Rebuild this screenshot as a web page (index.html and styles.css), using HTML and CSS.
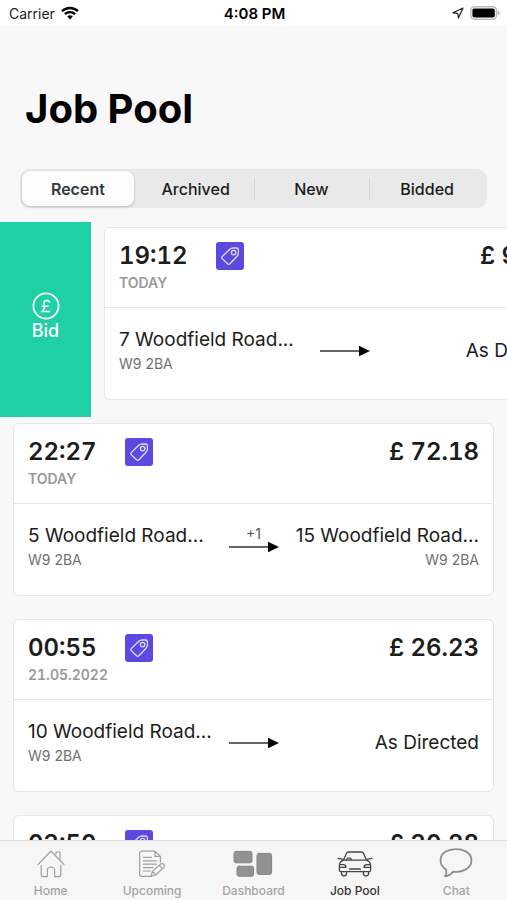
FILE: index.html
```html
<!DOCTYPE html>
<html lang="en">
<head>
<meta charset="utf-8">
<meta name="viewport" content="width=device-width, initial-scale=1">
<title>Job Pool</title>
<link rel="stylesheet" href="styles.css">
</head>
<body>
<svg class="sprite" aria-hidden="true">
  <symbol id="tag" viewBox="0 0 28 28">
    <path d="M6.2 14.6 L13.8 7.2 Q15.3 5.8 17.2 5.8 L20.6 6 Q22.4 6.2 22.4 8 V11 Q22.4 12.8 21 14.2 L14 21.8 Q12.8 23 11.6 21.8 L6.2 16.6 Q5.2 15.6 6.2 14.6 Z"/>
    <circle cx="17.6" cy="10.6" r="2.2"/>
  </symbol>
  <symbol id="arrow" viewBox="0 0 50 12">
    <path d="M0 6 H42" fill="none" stroke="#333" stroke-width="1.6"/>
    <path d="M39 .8 L50 6 L39 11.2 Z" fill="#000"/>
  </symbol>
</svg>

<div class="status">
  <div class="status-left">
    <span>Carrier</span>
    <svg width="18" height="14" viewBox="0 0 18 14" fill="none" stroke="#000" stroke-width="2.4" aria-hidden="true">
      <path d="M1 5.2 A11.6 11.6 0 0 1 17 5.2"/>
      <path d="M3.9 8.2 A7.4 7.4 0 0 1 14.1 8.2"/>
      <path d="M6.2 10.6 A4 4 0 0 1 11.8 10.6 L9 13.6 Z" fill="#000" stroke="none"/>
    </svg>
  </div>
  <span class="clock">4:08 PM</span>
  <div class="status-right">
    <svg width="12" height="12" viewBox="0 0 12 12" fill="none" stroke="#222" stroke-width="1.2" stroke-linejoin="round" aria-hidden="true"><path d="M11 1 L1 5.8 L5.7 6.3 L6.4 11 Z"/></svg>
    <svg width="30" height="14" viewBox="0 0 30 14" aria-hidden="true">
      <rect x=".8" y=".8" width="25.6" height="12.4" rx="3.6" fill="#fff" stroke="#bbb" stroke-width="1.4"/>
      <rect x="2.4" y="2.4" width="22.4" height="9.2" rx="2" fill="#000"/>
      <path d="M27.8 4.8 Q29.6 5.4 29.6 7 T27.8 9.2 Z" fill="#aaa"/>
    </svg>
  </div>
</div>

<header class="header">
  <h1>Job Pool</h1>
  <div class="segments">
    <button class="segment selected" type="button">Recent</button>
    <button class="segment" type="button">Archived</button>
    <button class="segment" type="button">New</button>
    <button class="segment" type="button">Bidded</button>
  </div>
</header>

<main class="jobs">
  <div class="row">
    <button class="bid" type="button">
      <svg width="28" height="28" viewBox="0 0 28 28" fill="none" stroke="#fff" stroke-width="1.8" aria-hidden="true">
        <circle cx="14" cy="14" r="12.6"/>
        <path d="M17.7 10.6 C17.4 7.7 12 7.4 12 11.2 C12 13.4 13.8 16.6 10.2 19.6 H18.2 M9.6 14.2 H16.6" stroke-width="1.5"/>
      </svg>
      <span>Bid</span>
    </button>
    <article class="card">
      <div class="card-head">
        <div><div class="time">19:12</div><div class="date">TODAY</div></div>
        <svg class="badge" aria-hidden="true"><use href="#tag"/></svg>
        <div class="price">£ 95.40</div>
      </div>
      <div class="route">
        <div><div class="place">7 Woodfield Road...</div><div class="code">W9 2BA</div></div>
        <div class="leg"><svg class="arrow" aria-hidden="true"><use href="#arrow"/></svg></div>
        <div class="to"><div class="place">As Directed</div></div>
      </div>
    </article>
  </div>
  <div class="row">
    <article class="card">
      <div class="card-head">
        <div><div class="time">22:27</div><div class="date">TODAY</div></div>
        <svg class="badge" aria-hidden="true"><use href="#tag"/></svg>
        <div class="price">£ 72.18</div>
      </div>
      <div class="route">
        <div><div class="place">5 Woodfield Road...</div><div class="code">W9 2BA</div></div>
        <div class="leg"><span class="stops">+1</span><svg class="arrow" aria-hidden="true"><use href="#arrow"/></svg></div>
        <div class="to"><div class="place">15 Woodfield Road...</div><div class="code">W9 2BA</div></div>
      </div>
    </article>
  </div>
  <div class="row">
    <article class="card">
      <div class="card-head">
        <div><div class="time">00:55</div><div class="date">21.05.2022</div></div>
        <svg class="badge" aria-hidden="true"><use href="#tag"/></svg>
        <div class="price">£ 26.23</div>
      </div>
      <div class="route">
        <div><div class="place">10 Woodfield Road...</div><div class="code">W9 2BA</div></div>
        <div class="leg"><svg class="arrow" aria-hidden="true"><use href="#arrow"/></svg></div>
        <div class="to"><div class="place">As Directed</div></div>
      </div>
    </article>
  </div>
  <div class="row">
    <article class="card">
      <div class="card-head">
        <div><div class="time">03:50</div></div>
        <svg class="badge" aria-hidden="true"><use href="#tag"/></svg>
        <div class="price">£ 30.28</div>
      </div>
    </article>
  </div>
</main>

<nav class="tabs">
  <a class="tab" href="#home">
    <svg width="28" height="28" viewBox="0 0 28 28" aria-hidden="true">
      <path d="M1 14.6 L13 2 Q14 1 15 2 L27 14.6 M19 4 V2 H23 V10 M4.2 15.4 V24.6 Q4.2 26.6 6.2 26.6 H10.4 V20 Q10.4 17 14 17 T17.6 20 V26.6 H21.8 Q23.8 26.6 23.8 24.6 V15.4"/>
    </svg>
    <span>Home</span>
  </a>
  <a class="tab" href="#upcoming">
    <svg width="28" height="28" viewBox="0 0 28 28" aria-hidden="true">
      <path d="M14 26.4 H4 Q1.6 26.4 1.6 24 V3.6 Q1.6 1.2 4 1.2 H17 L22.4 6.4 V12 M17 1.2 V6.4 H22.4 M5.4 7.4 H13.6 M5.4 10.8 H18.4 M5.4 14.2 H18.4 M5.4 17.6 H15 M5.4 21 H12.4 M14.4 21.4 L23 13.8 Q24.4 13 26 14.6 Q27 16 26 17.2 L17.6 25 L13.2 26 Z M14.4 21.4 L17.6 25 M21.4 15.4 L24.4 18.6"/>
    </svg>
    <span>Upcoming</span>
  </a>
  <a class="tab" href="#dashboard">
    <svg width="40" height="28" viewBox="0 0 40 28" aria-hidden="true">
      <g fill="#929292" stroke="#858585" stroke-width="1"><rect x="1" y="1.4" width="18" height="11.4" rx="2"/><rect x="4" y="16.2" width="16.6" height="10" rx="2"/><rect x="24" y="3.4" width="14.6" height="21" rx="2"/></g>
    </svg>
    <span>Dashboard</span>
  </a>
  <a class="tab current" href="#pool" aria-current="page">
    <svg width="36" height="28" viewBox="0 0 36 28" aria-hidden="true">
      <path d="M6.4 10.2 L9.4 3.4 Q9.8 2 11.6 2 H24.4 Q26 2 26.6 3.4 L29.6 10.2 M1 8.4 L5.4 9.2 M35 8.4 L30.6 9.2 M6.4 10.2 H29.6 Q33.6 12 33.6 15.6 V20.2 Q33.6 21.6 32.2 21.6 H3.8 Q2.4 21.6 2.4 20.2 V15.6 Q2.4 12 6.4 10.2 Z M2.6 14.6 H6.6 Q9 15 9 17.4 H2.6 M33.4 14.6 H29.4 Q27 15 27 17.4 H33.4 M12.6 19 H23.4 M4.4 21.6 V23.6 Q4.4 26 7 26 T9.6 23.6 V21.6 M26.4 21.6 V23.6 Q26.4 26 29 26 T31.6 23.6 V21.6 M9.4 10 Q10 7.8 12 7.8 T14.4 10"/>
    </svg>
    <span>Job Pool</span>
  </a>
  <a class="tab" href="#chat">
    <svg class="chat" width="34" height="30" viewBox="0 0 34 30" aria-hidden="true">
      <path d="M7.2 21.8 C-1 16.4 .4 7.4 6.8 3.6 C12 .4 21 .2 26.8 3.4 C34.4 7.6 34.2 17.4 26.8 21.4 C22.6 23.8 18.2 24.2 14.4 23.6 C12.2 26.4 9.4 27.8 6 28.4 C7.4 26.2 7.8 24 7.2 21.8 Z"/>
    </svg>
    <span>Chat</span>
  </a>
</nav>
</body>
</html>
```

FILE: styles.css
```css
* { box-sizing: border-box; }

body {
  display: flex;
  flex-direction: column;
  height: 100vh;
  margin: 0;
  overflow: hidden;
  background: #f8f8f8;
  color: #1c1c1c;
  font-family: Inter, "Liberation Sans", sans-serif;
}

button {
  border: 0;
  padding: 0;
  background: none;
  color: inherit;
  font: inherit;
}

.sprite {
  position: absolute;
  width: 0;
  height: 0;
}

.status {
  display: grid;
  grid-template-columns: 1fr auto 1fr;
  align-items: center;
  flex: none;
  height: 26px;
  padding: 0 7px 0 9px;
  background: #fff;
  font-size: 14px;
}

.status-left,
.status-right {
  display: flex;
  align-items: center;
  gap: 6px;
}

.status-right { justify-content: flex-end; }

.clock {
  color: #000;
  font-size: 15px;
  font-weight: 600;
}

.header {
  flex: none;
  padding: 58px 20px 14px;
}

h1 {
  margin: 0 5px;
  color: #000;
  font-size: 40px;
  line-height: 50px;
  font-weight: 700;
}

.segments {
  display: grid;
  grid-template-columns: repeat(4, 1fr);
  margin-top: 35px;
  padding: 2px;
  border-radius: 10px;
  background: #e9e9e9;
}

.segment {
  height: 35px;
  font-size: 16px;
  font-weight: 500;
}

.segment + .segment {
  background: linear-gradient(#d6d6d6, #d6d6d6) left center / 1px 22px no-repeat;
}

.segment.selected {
  margin-right: 4px;
  border-radius: 8px;
  background: #fcfcfc;
  box-shadow: 0 1px 3px rgba(0, 0, 0, 0.2);
  font-weight: 600;
  color: #33383b;
}

.segment.selected + .segment { background: none; }

.jobs {
  flex: 1;
  min-height: 0;
  overflow: hidden auto;
  scrollbar-width: none;
}

.row {
  display: flex;
  height: 196px;
  overflow: hidden;
}

.bid {
  display: flex;
  flex: 0 0 91px;
  flex-direction: column;
  align-items: center;
  justify-content: center;
  height: 195px;
  padding-bottom: 5px;
  background: #20d0a5;
  color: #fff;
  font-size: 18px;
  line-height: 22px;
  font-weight: 500;
}

.card {
  flex: 0 0 calc(100% - 26px);
  height: 173px;
  margin: 5px 13px 0;
  border: 1px solid #e6e6e6;
  border-radius: 6px;
  background: #fff;
}

.card-head {
  display: grid;
  grid-template-columns: 97px 28px 1fr;
  align-items: start;
  height: 80px;
  padding: 12px 14px 0;
  border-bottom: 1px solid #e6e6e6;
}

.time,
.price {
  font-size: 24px;
  line-height: 32px;
  font-weight: 600;
  font-variant-numeric: tabular-nums;
  white-space: nowrap;
}

.price { text-align: right; }

.date {
  margin-top: 2px;
  color: #999;
  font-size: 14px;
  line-height: 18px;
  font-weight: 600;
  font-variant-numeric: tabular-nums;
}

.badge {
  width: 28px;
  height: 28px;
  margin-top: 2px;
  border-radius: 3px;
  background: #5b49e0;
  fill: none;
  stroke: #e4defc;
  stroke-width: 1.3;
}

.route {
  display: grid;
  grid-template-columns: 1fr 50px 1fr;
  align-items: center;
  padding: 20px 14px 0;
}

.place {
  font-size: 19px;
  line-height: 24px;
  white-space: nowrap;
}

.code {
  margin-top: 2px;
  color: #707070;
  font-size: 14px;
  line-height: 20px;
}

.to {
  justify-self: end;
  text-align: right;
}

.leg { position: relative; }

.arrow {
  display: block;
  width: 50px;
  height: 12px;
}

.stops {
  position: absolute;
  bottom: 10px;
  left: 0;
  width: 100%;
  color: #555;
  font-size: 14px;
  line-height: 18px;
  text-align: center;
}

.tabs {
  display: grid;
  grid-template-columns: repeat(5, 1fr);
  flex: none;
  height: 60px;
  border-top: 1px solid #dcdcdc;
  background: #f6f6f7;
}

.tab {
  display: flex;
  flex-direction: column;
  align-items: center;
  justify-content: flex-end;
  gap: 5px;
  padding-bottom: 1px;
  color: #a4a4a4;
  font-size: 12px;
  line-height: 16px;
  font-weight: 500;
  text-decoration: none;
}

.tab svg {
  fill: none;
  stroke: #a0a0a0;
  stroke-width: 1.2;
  stroke-linejoin: round;
  stroke-linecap: round;
}

.tab .chat {
  stroke: #8e8e8e;
  stroke-width: 1.8;
}

.tab.current { color: #333; }

.tab.current svg {
  stroke: #444;
  stroke-width: 1.3;
}
```
